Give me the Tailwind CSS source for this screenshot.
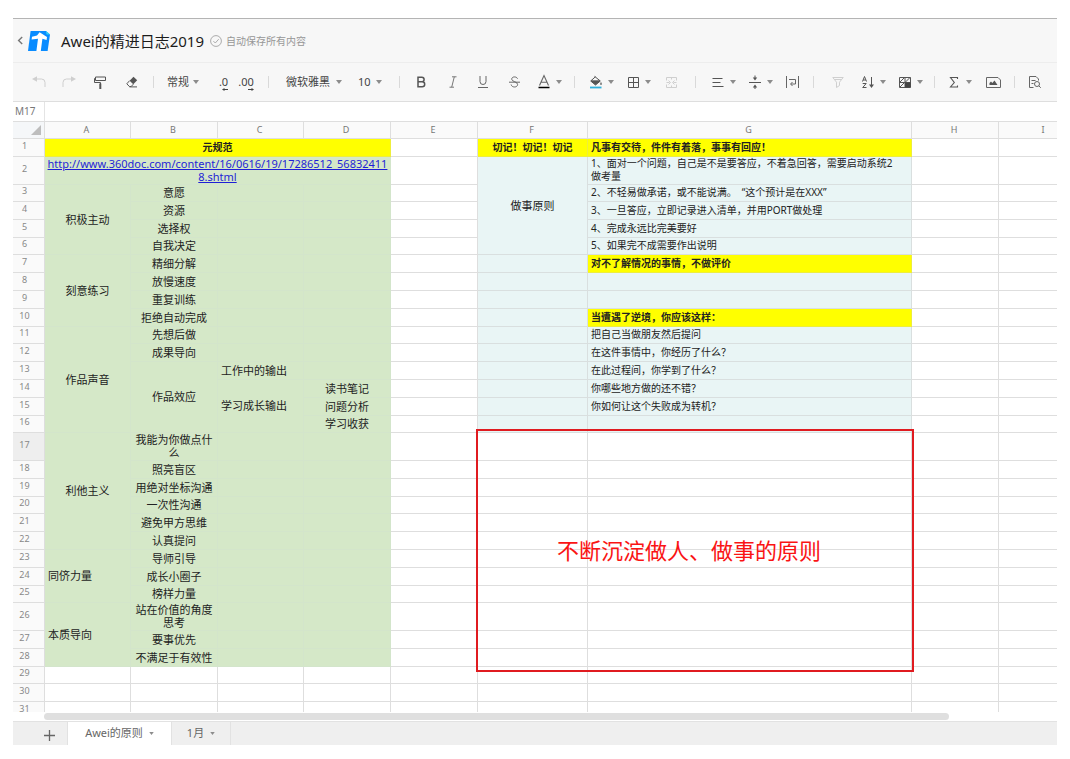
<!DOCTYPE html>
<html lang="zh-CN">
<head>
<meta charset="utf-8">
<meta name="viewport" content="width=device-width, initial-scale=1">
<title>Awei的精进日志2019</title>
<script src="https://cdn.jsdelivr.net/npm/@tailwindcss/browser@4"></script>
</head>
<body class="h-screen flex flex-col bg-white px-[13px] pt-[18px] pb-[14px] font-['Noto_Sans','Noto_Sans_CJK_SC',sans-serif] text-[#333]">

<!-- shared symbols -->
<svg class="hidden">
  <symbol id="caret" viewBox="0 0 6 4"><path d="M0 0h6L3 4z" fill="#8c8c8c"/></symbol>
</svg>

<header class="h-[44px] shrink-0 flex items-center border-t border-[#b4b4b4] bg-[#f7f7f7] pl-[4px]">
  <button class="w-[7px] h-4 flex items-center" aria-label="返回">
    <svg class="w-[7px] h-[9px]" viewBox="0 0 7 9" fill="none" stroke="#777" stroke-width="1.4"><path d="M5.2 1 1.6 4.5 5.2 8"/></svg>
  </button>
  <svg class="ml-1 w-[23px] h-5" viewBox="0 0 23 20">
    <path d="M2.6 0H18l4 3.6L19.6 20H0z" fill="#0a8cff"/>
    <path d="M18 0l4 3.6-3.4-.2z" fill="#35d6f5"/>
    <path d="M11.6 1.2 19 6l-.4 3-4.2-1.2L12.8 20H8.4L10 7.8 3.6 8.6 4 5.8l5-1.2z" fill="#fff"/>
  </svg>
  <h1 class="ml-[10px] text-[15px] leading-5 text-[#1c1c1c]">Awei的精进日志2019</h1>
  <svg class="ml-[6px] w-3 h-3" viewBox="0 0 12 12" fill="none" stroke="#a3a3a3" stroke-width=".9"><circle cx="6" cy="6" r="5.4"/><path d="M3.4 6.1 5.3 8l3.4-3.8"/></svg>
  <span class="ml-1 text-[10px] leading-4 text-[#969696]">自动保存所有内容</span>
</header>

<div role="toolbar" aria-label="格式" class="h-[40px] shrink-0 flex items-center overflow-hidden border-t border-b border-t-[#ededed] border-b-[#dedede] bg-[#f7f7f7] pl-[11px] text-[11px] text-[#444] [&>*]:shrink-0 [&>*]:h-6 [&>*]:flex [&>*]:items-center">
  <button class="w-[30px] justify-center" aria-label="撤销"><svg class="w-[14px] h-3" viewBox="0 0 14 12"><path d="M4 3h5.5A3.5 3.5 0 0 1 13 6.500V11" fill="none" stroke="#cfcfcf"/><path d="M0 3 5 .2v5.600z" fill="#cfcfcf"/></svg></button>
  <button class="w-[30px] justify-center" aria-label="重做"><svg class="w-[14px] h-3" viewBox="0 0 14 12"><path d="M10 3H4.500A3.500 3.500 0 0 0 1 6.500V11" fill="none" stroke="#cfcfcf"/><path d="M14 3 9 .2v5.600z" fill="#cfcfcf"/></svg></button>
  <button class="w-8 justify-center" aria-label="格式刷"><svg class="w-3 h-[13px]" viewBox="0 0 12 13" fill="none" stroke="#555"><path d="M1.500 1h10v3.500h-10zM1.500 2.500h-1v4h6V8"/><path d="M6.300 7.500V13" stroke-width="2"/></svg></button>
  <button class="w-8 justify-center" aria-label="清除格式"><svg class="w-3 h-3" viewBox="0 0 12 12"><path d="M7.500.8 11.200 4.300 7.300 8.200 3.600 4.700z" fill="#555"/><path d="M3.600 4.700.8 7.800l2.600 2.700h1.800l2.100-2.300M3.500 10.900H11" fill="none" stroke="#555"/></svg></button>
  <span class="w-[10px] justify-center"><i class="w-px h-3 bg-[#d9d9d9]"></i></span>
  <label class="w-[53px] pl-[9px]"><select aria-label="数字格式" class="appearance-none bg-transparent w-[26px] leading-4"><option>常规</option></select><svg class="w-[6px] h-1"><use href="#caret"/></svg></label>
  <button class="w-[25px] justify-center" aria-label="减少小数位"><span class="relative leading-4">.0<svg class="absolute right-0 -bottom-[1px] w-[6px] h-[3px]" viewBox="0 0 6 3"><path d="M6 1.500H1" stroke="#444"/><path d="M0 1.500 2.500 0v3z" fill="#444"/></svg></span></button>
  <button class="w-5 justify-center" aria-label="增加小数位"><span class="relative leading-4">.00<svg class="absolute right-0 -bottom-[1px] w-[6px] h-[3px]" viewBox="0 0 6 3"><path d="M0 1.500H5" stroke="#444"/><path d="M6 1.500 3.500 0v3z" fill="#444"/></svg></span></button>
  <span class="w-6 justify-center"><i class="w-px h-3 bg-[#d9d9d9]"></i></span>
  <label class="w-[70px] pl-[6px]"><select aria-label="字体" class="appearance-none bg-transparent w-[50px] leading-4"><option>微软雅黑</option></select><svg class="w-[6px] h-1"><use href="#caret"/></svg></label>
  <label class="w-[44px] pl-2"><select aria-label="字号" class="appearance-none bg-transparent w-[18px] leading-4"><option>10</option></select><svg class="w-[6px] h-1"><use href="#caret"/></svg></label>
  <span class="w-[10px] justify-center"><i class="w-px h-3 bg-[#d9d9d9]"></i></span>
  <button class="w-[34px] justify-center" aria-label="加粗"><svg class="w-[9px] h-3" viewBox="0 0 9 12" fill="none" stroke="#555" stroke-width="1.500"><path d="M1 1.200h3.800a2.300 2.300 0 0 1 0 4.600H1zM1 5.800h4.200a2.500 2.500 0 0 1 0 5H1z"/></svg></button>
  <button class="w-[30px] justify-center" aria-label="斜体"><svg class="w-2 h-3" viewBox="0 0 8 12" fill="none" stroke="#777"><path d="M3 .8h4.500M.5 11.200H5M5.300.8 2.700 11.200"/></svg></button>
  <button class="w-[30px] justify-center" aria-label="下划线"><svg class="w-[10px] h-3" viewBox="0 0 10 12" fill="none" stroke="#666"><path d="M2 0v5.500a3 3 0 0 0 6 0V0M0 11.500h10"/></svg></button>
  <button class="w-8 justify-center" aria-label="删除线"><svg class="w-[11px] h-3" viewBox="0 0 11 12" fill="none" stroke="#666"><path d="M8.500 2.700C7.800.3 2.700.2 2.700 3.200c0 2.600 5.900 2.200 5.900 5.300 0 3.300-6 3.300-6.500 0M0 6.200h11"/></svg></button>
  <button class="w-[37px] pl-[6px] gap-1" aria-label="文字颜色"><svg class="w-4 h-4" viewBox="0 0 16 16"><path d="M3.500 11.500 8 1.500l4.500 10M5 8.300h6" fill="none" stroke="#666" stroke-width="1.100"/><path d="M2.500 13.500h11" stroke="#000" stroke-width="1.500"/></svg><svg class="w-[6px] h-1"><use href="#caret"/></svg></button>
  <span class="w-[15px] justify-center"><i class="w-px h-3 bg-[#d9d9d9]"></i></span>
  <button class="w-[37px] pl-[6px] gap-1" aria-label="填充颜色"><svg class="w-4 h-4" viewBox="0 0 16 16"><path d="M6.500 2.300 12.300 7 7.500 11 2.700 7l4.800-4.300M3 6.800h9" fill="none" stroke="#555"/><path d="M3 7h9l-4.500 4zM13 8c1 1.500 1 3 0 3s-1-1.500 0-3" fill="#555"/><path d="M2 13.500h11.500" stroke="#2fb0dc" stroke-width="1.800"/></svg><svg class="w-[6px] h-1"><use href="#caret"/></svg></button>
  <button class="w-[37px] pl-[6px] gap-1" aria-label="边框"><svg class="w-4 h-4" viewBox="0 0 16 16" fill="none" stroke="#555"><path d="M3.500 3.500h10v10h-10zM8.500 3.500v10M3.500 8.500h10"/></svg><svg class="w-[6px] h-1"><use href="#caret"/></svg></button>
  <button class="w-[30px] justify-center" aria-label="合并单元格"><svg class="w-[11px] h-[11px]" viewBox="0 0 11 11" fill="none" stroke="#cfcfcf"><path d="M.5 3.500v-3h10v3M.5 7.500v3h10v-3M5.500.5v2M5.500 8.500v2M.5 5.500h3M7.500 5.500h3M2.500 3.500l2 2-2 2M8.500 3.500l-2 2 2 2"/></svg></button>
  <span class="w-[18px] justify-center"><i class="w-px h-3 bg-[#d9d9d9]"></i></span>
  <button class="w-[37px] pl-[6px] gap-1" aria-label="水平对齐"><svg class="w-4 h-4" viewBox="0 0 16 16" fill="none" stroke="#555"><path d="M2.500 4.500h10M2.500 8.500h8M2.500 12.500h11"/></svg><svg class="w-[6px] h-1"><use href="#caret"/></svg></button>
  <button class="w-[37px] pl-[6px] gap-1" aria-label="垂直对齐"><svg class="w-4 h-4" viewBox="0 0 16 16"><path d="M2 8.500h12M8 1.500V4M8 15v-2" fill="none" stroke="#555"/><path d="M8 6.500 5.800 3.500h4.400zM8 10.500l-2.200 3h4.400z" fill="#555"/></svg><svg class="w-[6px] h-1"><use href="#caret"/></svg></button>
  <button class="w-7 justify-center" aria-label="自动换行"><svg class="w-[13px] h-3" viewBox="0 0 13 12" fill="none" stroke="#666"><path d="M.5 0v12M12.500 0v12M3 3.500h6.500v4.500H5M6.500 6 4.500 8l2 2"/></svg></button>
  <span class="w-[15px] justify-center"><i class="w-px h-3 bg-[#d9d9d9]"></i></span>
  <button class="w-[33px] justify-center" aria-label="筛选"><svg class="w-3 h-[11px]" viewBox="0 0 12 11" fill="none" stroke="#cfcfcf"><path d="M.8.5h10.400L7.500 5.200V8.500l-3 2V5.200zM2.500 2.500h7"/></svg></button>
  <button class="w-[37px] pl-[6px] gap-1" aria-label="排序"><svg class="w-4 h-4" viewBox="0 0 16 16"><path d="M2.500 7.500 4.500 2.500l2 5M3.200 6h2.600M2.700 9.500h3.500l-3.500 4h3.800M11.500 3v9" fill="none" stroke="#555"/><path d="M11.500 14 9 10.500h5z" fill="#555"/></svg><svg class="w-[6px] h-1"><use href="#caret"/></svg></button>
  <button class="w-[37px] pl-[6px] gap-1" aria-label="条件格式"><svg class="w-4 h-4" viewBox="0 0 16 16"><path d="M2.500 3.500h11v10h-11zM8 3.500v10M2.500 8.500h11M3 8l4.500-4.500M8.500 8 13 3.500M3 13l4.500-4.500" fill="none" stroke="#555"/><path d="M8 8.500h5.500v5H8z" fill="#444"/></svg><svg class="w-[6px] h-1"><use href="#caret"/></svg></button>
  <span class="w-3 justify-center"><i class="w-px h-3 bg-[#d9d9d9]"></i></span>
  <button class="w-[37px] pl-[6px] gap-1" aria-label="求和"><svg class="w-4 h-4" viewBox="0 0 16 16" fill="none" stroke="#555" stroke-width="1.100"><path d="M11.500 5V3.500h-7L8.300 8.500l-3.800 4.500h7v-1.500"/></svg><svg class="w-[6px] h-1"><use href="#caret"/></svg></button>
  <button class="w-8 justify-center" aria-label="插入图片"><svg class="w-[15px] h-[11px]" viewBox="0 0 15 11"><path d="M.5.5H12L14.500 3v7.500H.5z" fill="none" stroke="#666"/><path d="M3.500 8V6l1.500-1.500L6.300 6 8.500 3.500 11.500 8z" fill="#555"/></svg></button>
  <span class="w-[10px] justify-center"><i class="w-px h-3 bg-[#d9d9d9]"></i></span>
  <button class="w-8 justify-center" aria-label="查找"><svg class="w-3 h-3" viewBox="0 0 12 12" fill="none" stroke="#666"><path d="M4.500 11.500h-4V.5H7L9.500 3v1.500M2.500 4.500h4M2.500 7.500h2"/><circle cx="8" cy="8" r="2.500"/><path d="M9.800 9.800 11.800 11.800"/></svg></button>
</div>

<div class="h-5 shrink-0 flex border-b border-[#dedede] text-[10px]">
  <input aria-label="名称框" value="M17" class="w-8 border-r border-[#e4e4e4] pl-[2px] text-[#777]">
  <input aria-label="编辑栏" value="" class="flex-1 min-w-0 px-2">
</div>

<main class="relative flex-1 min-h-0 overflow-hidden">
  <table id="sheet" class="table-fixed w-[1077px] min-w-full border-separate border-spacing-0">
    <colgroup>
      <col class="w-[32px]"><col class="w-[86px]"><col class="w-[87px]"><col class="w-[86px]"><col class="w-[87px]"><col class="w-[87px]"><col class="w-[110px]"><col class="w-[324px]"><col class="w-[87px]"><col>
    </colgroup>
    <thead><tr id="letters"></tr></thead>
    <tbody id="rows"></tbody>
  </table>
  <div class="absolute left-[463px] top-[307px] w-[438px] h-[243px] border-2 border-[#e01b20] flex items-center justify-center pr-3 pb-[2px] text-[22px] leading-7 text-[#fa1414]">不断沉淀做人、做事的原则</div>
</main>

<div class="h-[9px] shrink-0 flex items-center pl-[31px] pr-[108px]">
  <div class="flex-1 h-[7px] rounded-full bg-[#dfdfdf]"></div>
</div>

<nav aria-label="工作表" class="h-6 shrink-0 flex border-t border-[#e2e2e2] bg-[#efefef] text-[11px] text-[#666]">
  <button class="w-[55px] pl-[19px] flex items-center justify-center border-r border-[#e2e2e2]" aria-label="添加工作表"><svg class="mt-1 w-[11px] h-[11px]" viewBox="0 0 11 11" stroke="#666" stroke-width="1.300"><path d="M0 5.500h11M5.500 0v11"/></svg></button>
  <button class="w-[103px] flex items-center justify-center gap-[6px] bg-white">Awei的原则<svg class="w-[5px] h-[3px]" viewBox="0 0 6 4"><path d="M0 0h6L3 4z" fill="#8c8c8c"/></svg></button>
  <button class="w-[60px] flex items-center justify-center gap-[6px] border-l border-r border-[#e2e2e2]">1月<svg class="w-[5px] h-[3px]" viewBox="0 0 6 4"><path d="M0 0h6L3 4z" fill="#8c8c8c"/></svg></button>
</nav>

<script>
const LETTERS = ['A','B','C','D','E','F','G','H','I'];
const ROW_H = {2:'h-[28px]',17:'h-[28px]',26:'h-[28px]',3:'h-[17px]',6:'h-[17px]',11:'h-[17px]',16:'h-[17px]',20:'h-[17px]',25:'h-[17px]',29:'h-[17px]'};

const GREEN  = 'bg-[#d5e8c8] border-r border-b border-[#d3e5cb] text-center text-[11px] leading-[13px] text-[#222]';
const GREEN_LEFT = 'bg-[#d5e8c8] border-r border-b border-[#d3e5cb] text-left pl-[3px] text-[11px] leading-[13px] text-[#222]';
const BLUE   = 'bg-[#e9f5f5] border-r border-b border-[#d9dfdf] text-left pl-[3px] text-[10px] leading-[13px] text-[#222]';
const BLUE_MID = 'bg-[#e9f5f5] border-r border-b border-[#d9dfdf] text-center text-[11px] leading-[13px] text-[#222]';
const YELLOW = 'bg-[#ffff00] border-r border-b border-[#eeee3c] text-left pl-[3px] text-[10px] leading-[13px] font-bold text-[#222]';
const YELLOW_MID = 'bg-[#ffff00] border-r border-b border-[#eeee3c] text-center text-[10px] leading-[13px] font-bold text-[#222]';
const BLANK  = 'bg-white border-r border-b border-[#dedede]';

// text, class, rowspan, colspan
const CELLS = {
  A1:['元规范',YELLOW_MID,1,4],
  A2:['<a class="text-[#1f1fd6] underline" href="http://www.360doc.com/content/16/0616/19/17286512_568324118.shtml">http://www.360doc.com/content/16/0616/19/17286512_56832411<wbr>8.shtml</a>',GREEN,1,4],
  A3:['积极主动',GREEN,4], A7:['刻意练习',GREEN,4], A11:['作品声音',GREEN,6], A17:['利他主义',GREEN,6],
  A23:['同侪力量',GREEN_LEFT,3], A26:['本质导向',GREEN_LEFT,3],
  B3:['意愿'],B4:['资源'],B5:['选择权'],B6:['自我决定'],B7:['精细分解'],B8:['放慢速度'],B9:['重复训练'],B10:['拒绝自动完成'],
  B11:['先想后做'],B12:['成果导向'],B13:['作品效应',GREEN,4],C13:['工作中的输出',GREEN_LEFT],C14:['学习成长输出',GREEN_LEFT,3],
  D14:['读书笔记'],D15:['问题分析'],D16:['学习收获'],
  B17:['我能为你做点什<wbr>么'],B18:['照亮盲区'],B19:['用绝对坐标沟通'],B20:['一次性沟通'],B21:['避免甲方思维'],B22:['认真提问'],
  B23:['导师引导'],B24:['成长小圈子'],B25:['榜样力量'],B26:['站在价值的角度<wbr>思考'],B27:['要事优先'],B28:['不满足于有效性'],
  F1:['切记！切记！切记',YELLOW_MID], F2:['做事原则',BLUE_MID,5],
  G1:['凡事有交待，件件有着落，事事有回应！',YELLOW],
  G2:['1、面对一个问题，自己是不是要答应，不着急回答，需要启动系统2<br>做考量'],
  G3:['2、不轻易做承诺，或不能说满。&ensp;“这个预计是在XXX”'],
  G4:['3、一旦答应，立即记录进入清单，并用PORT做处理'],
  G5:['4、完成永远比完美要好'],G6:['5、如果完不成需要作出说明'],
  G7:['对不了解情况的事情，不做评价',YELLOW],G10:['当遭遇了逆境，你应该这样：',YELLOW],
  G11:['把自己当做朋友然后提问'],G12:['在这件事情中，你经历了什么？'],G13:['在此过程间，你学到了什么？'],
  G14:['你哪些地方做的还不错？'],G15:['你如何让这个失败成为转机？']
};

const area = (c, r) => c < 4 && r <= 28 ? GREEN : (c === 5 || c === 6) && r <= 16 ? BLUE : BLANK;

document.getElementById('letters').innerHTML =
  '<th class="h-[17px] p-0 bg-[#f5f7f9] border-r border-b border-[#dedede]"><svg class="ml-auto mr-[3px] w-[10px] h-[10px]" viewBox="0 0 10 10"><path d="M10 0v10H0z" fill="#bdbdbd"/></svg></th>' +
  LETTERS.map(l => `<th scope="col" class="h-[17px] p-0 pr-[2px] pb-[2px] bg-[#fafafa] border-r border-b border-[#dedede] text-[9px] leading-[13px] font-normal text-[#777]">${l}</th>`).join('');

const covered = new Set();
let html = '';
for (let r = 1; r <= 31; r++) {
  const h = ROW_H[r] || 'h-[18px]';
  html += `<tr class="${h}"><th scope="row" class="${r === 17 ? 'bg-[#eeeeee]' : 'bg-[#fafafa]'} p-0 pr-2 pb-1 border-r border-b border-[#dedede] text-[9px] leading-[10px] font-normal text-[#888]">${r}</th>`;
  LETTERS.forEach((l, c) => {
    if (covered.has(l + r)) return;
    const [text = '', cls = area(c, r), rs = 1, cs = 1] = CELLS[l + r] || [];
    for (let i = 0; i < rs; i++) for (let j = 0; j < cs; j++) covered.add(LETTERS[c + j] + (r + i));
    html += `<td class="p-0 pb-px ${cls}" rowspan="${rs}" colspan="${cs}">${text}</td>`;
  });
  html += '</tr>';
}
document.getElementById('rows').innerHTML = html;
</script>
</body>
</html>
